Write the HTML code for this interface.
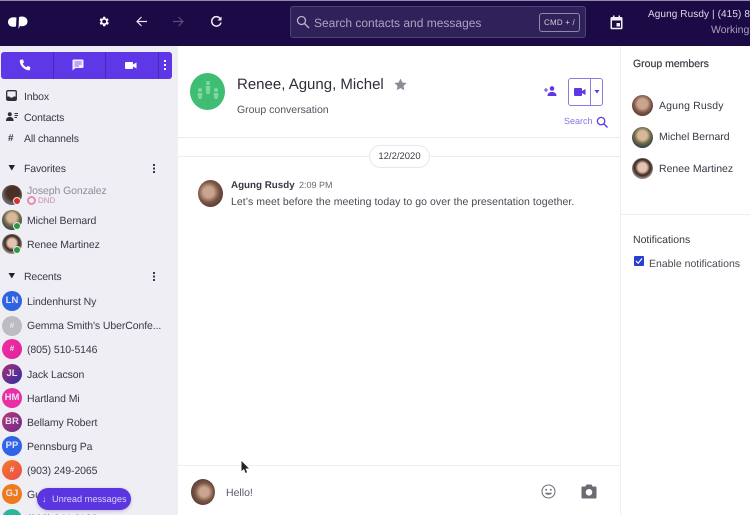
<!DOCTYPE html>
<html><head><meta charset="utf-8">
<style>
*{box-sizing:border-box}
html,body{margin:0;padding:0;width:750px;height:515px;overflow:hidden}
#w{position:relative;width:750px;height:515px;overflow:hidden;background:#fff;font-family:"Liberation Sans",sans-serif;color:#3a3844;font-size:11px;letter-spacing:0;text-rendering:geometricPrecision;filter:blur(.3px)}
.a{position:absolute;white-space:nowrap}
.s{letter-spacing:-.15px}
.av{position:absolute;border-radius:50%;width:20px;height:20px;left:2px;color:#e9e4f4;font-weight:bold;font-size:9.500px;text-align:center;line-height:20px;letter-spacing:0}
.n{position:absolute;left:27px;white-space:nowrap;font-size:10.500px;line-height:14px;letter-spacing:-.1px;margin-top:1px}
.dot{position:absolute;width:8px;height:8px;border-radius:50%;left:13px;border:1px solid #efeef4}
svg{position:absolute;overflow:visible}
</style></head><body><div id="w">
<!-- top bar -->
<div class="a" style="left:0;top:0;width:750px;height:46px;background:#1b0a45"></div>
<div class="a" style="left:0;top:0;width:750px;height:1px;background:#8f8aa5"></div>
<svg style="left:7px;top:14px" width="22" height="16" viewBox="0 0 22 16"><path d="M9.500 3.500C5 2.500 1 4 1 8s4 5.500 8 4.500zM12 3C17 1.500 20.500 4 20.500 7.500S17 13 13 12L11.500 15z" fill="#fff"/></svg>
<svg style="left:97px;top:15px" width="13" height="13" viewBox="0 0 24 24"><path fill="#fff" d="M19.400 13a7.500 7.500 0 0 0 0-2l2.100-1.600-2-3.500-2.500 1a7.500 7.500 0 0 0-1.700-1L15.400 3.200h-4l-.4 2.700a7.500 7.500 0 0 0-1.700 1l-2.500-1-2 3.500L6.900 11a7.500 7.500 0 0 0 0 2l-2.100 1.600 2 3.500 2.500-1a7.500 7.500 0 0 0 1.700 1l.4 2.700h4l.4-2.700a7.500 7.500 0 0 0 1.700-1l2.500 1 2-3.500zM13.200 15.500a3.500 3.500 0 1 1 0-7 3.500 3.500 0 0 1 0 7z"/></svg>
<svg style="left:135px;top:15px" width="13" height="13" viewBox="0 0 13 13"><path d="M12 6.500H2M6.500 2L2 6.500 6.500 11" fill="none" stroke="#e8e5f0" stroke-width="1.200"/></svg>
<svg style="left:172px;top:15px" width="13" height="13" viewBox="0 0 13 13"><path d="M1 6.500H11M6.500 2L11 6.500 6.500 11" fill="none" stroke="#5b4d7c" stroke-width="1.200"/></svg>
<svg style="left:210px;top:15px" width="13" height="13" viewBox="0 0 13 13"><path d="M10.500 4A4.700 4.700 0 1 0 11 7.500" fill="none" stroke="#f0eef5" stroke-width="1.500"/><path d="M11.500 1.500V5.500H7.500z" fill="#f0eef5"/></svg>
<div class="a" style="left:290px;top:6px;width:296px;height:32px;background:#2f2159;border:1px solid #4f4375;border-radius:3px"></div>
<svg style="left:296px;top:15px" width="14" height="14" viewBox="0 0 14 14"><circle cx="5.500" cy="5.500" r="4" fill="none" stroke="#b9b3cb" stroke-width="1.300"/><path d="M8.500 8.500L13 13" stroke="#b9b3cb" stroke-width="1.400"/></svg>
<div class="a" style="left:314px;top:15px;font-size:12px;line-height:16px;color:#aaa4bd">Search contacts and messages</div>
<div class="a" style="left:539px;top:13px;width:41px;height:19px;border:1px solid #8f88a8;border-radius:3px;color:#d5d1e0;font-size:8px;line-height:17px;text-align:center;letter-spacing:.2px">CMD + /</div>
<svg style="left:610px;top:15px" width="13" height="15" viewBox="0 0 13 15"><path fill="#f2f0f7" d="M1.500 2H3V.5h1.500V2h4V.5H10V2h1.500A1.300 1.300 0 0 1 12.500 3.300V13a1.300 1.300 0 0 1-1 1.300h-10A1.300 1.300 0 0 1 .5 13V3.300A1.300 1.300 0 0 1 1.500 2zM2 5.500V12.800H11V5.500z"/><rect x="6.500" y="8" width="3.500" height="3.500" fill="#f2f0f7"/></svg>
<div class="a" style="left:648px;top:8px;font-size:10px;line-height:14px;color:#dedbe8;letter-spacing:.1px">Agung Rusdy | (415) 8</div>
<div class="a" style="left:711px;top:23px;font-size:10.500px;line-height:14px;color:#a6a0b8">Working</div>

<!-- sidebar -->
<div class="a" style="left:0;top:46px;width:178px;height:469px;background:#efeef4"></div>
<div class="a" style="left:1px;top:52px;width:171px;height:27px;background:#5e37e6;border-radius:3px"></div>
<div class="a" style="left:53px;top:52px;width:1px;height:27px;background:#4a27bd"></div>
<div class="a" style="left:105px;top:52px;width:1px;height:27px;background:#4a27bd"></div>
<div class="a" style="left:158px;top:52px;width:1px;height:27px;background:#4a27bd"></div>
<svg style="left:19px;top:59px" width="12" height="12" viewBox="0 0 12 12"><path d="M1.500.8L4 .5 5 3.200 3.700 4.500C4.300 6 5.800 7.600 7.500 8.200L8.800 7 11.300 8 11 10.600C10.800 11.200 10 11.500 9.300 11.300 5 10.500 1.500 7 .8 2.600.7 1.700 1 1 1.500.8z" fill="#fff"/></svg>
<svg style="left:72px;top:59px" width="12" height="12" viewBox="0 0 12 12"><path d="M1.500.5h9A1 1 0 0 1 11.500 1.500V8a1 1 0 0 1-1 1H3.500L.5 11.500V1.500A1 1 0 0 1 1.500.5z" fill="#f1edff"/><path d="M2.500 3H9.500M2.500 5H9.500M2.500 7H7" stroke="#5e37e6" stroke-width=".8"/></svg>
<svg style="left:125px;top:61px" width="12" height="9" viewBox="0 0 12 9"><rect x="0" y="1" width="8" height="7" rx="1" fill="#fff"/><path d="M8 3.500L11.500 1.500V7.500L8 5.500z" fill="#fff"/></svg>
<div class="a" style="left:163.500px;top:60px;width:2px;height:2px;background:#fff;box-shadow:0 4px #fff,0 8px #fff"></div>

<svg style="left:6px;top:90px" width="11" height="11" viewBox="0 0 11 11"><rect x=".7" y=".7" width="9.600" height="9.600" rx="1.200" fill="none" stroke="#302e38" stroke-width="1.300"/><path d="M1 6.500H3.500C3.800 8 7.200 8 7.500 6.500H10V10H1z" fill="#302e38"/></svg>
<div class="a s" style="left:24px;top:90px;line-height:14px;font-size:10.500px">Inbox</div>
<svg style="left:6px;top:112px" width="12" height="9" viewBox="0 0 12 9"><circle cx="3.800" cy="2.300" r="2" fill="#302e38"/><path d="M0 9C0 6 1.500 5 3.800 5S7.600 6 7.600 9z" fill="#302e38"/><path d="M8.500 1.500H12M8.500 3.500H12M8.500 5.500H11" stroke="#302e38" stroke-width=".9"/></svg>
<div class="a s" style="left:24px;top:111px;line-height:14px;font-size:10.500px">Contacts</div>
<div class="a" style="left:8px;top:132px;line-height:14px;font-size:10px;font-weight:bold">#</div>
<div class="a s" style="left:24px;top:132px;line-height:14px;font-size:10.500px">All channels</div>

<svg style="left:8px;top:165px" width="8" height="6" viewBox="0 0 8 6"><path d="M.5 0H7L3.800 5.500z" fill="#22202a"/></svg>
<div class="a s" style="left:24px;top:162px;line-height:14px;font-size:10.500px">Favorites</div>
<div class="a" style="left:153px;top:164px;width:2px;height:2px;background:#3a3844;box-shadow:0 3.500px #3a3844,0 7px #3a3844"></div>

<div class="av" style="top:185px;background:radial-gradient(circle at 55% 40%,#4a2f25 0 38%,#68666a 65%)"></div>
<div class="dot" style="top:197px;background:#d8322a"></div>
<div class="n" style="top:183px;color:#8f8b99">Joseph Gonzalez</div>
<div class="a" style="left:27px;top:196px;width:9px;height:9px;border-radius:50%;border:2px solid #e68cb5"></div>
<div class="a" style="left:38px;top:195px;font-size:8px;line-height:11px;color:#c792ab">DND</div>

<div class="av" style="top:210px;background:radial-gradient(circle at 50% 38%,#d8b89a 0 28%,#6d6a45 50%,#2d3550 85%)"></div>
<div class="dot" style="top:222px;background:#2b9a3e"></div>
<div class="n" style="top:213px">Michel Bernard</div>

<div class="av" style="top:234px;background:radial-gradient(circle at 50% 45%,#e3c4b2 0 28%,#3a2620 48%,#d9d4cd 85%)"></div>
<div class="dot" style="top:246px;background:#2b9a3e"></div>
<div class="n" style="top:237px">Renee Martinez</div>

<svg style="left:8px;top:273px" width="8" height="6" viewBox="0 0 8 6"><path d="M.5 0H7L3.800 5.500z" fill="#22202a"/></svg>
<div class="a s" style="left:24px;top:270px;line-height:14px;font-size:10.500px">Recents</div>
<div class="a" style="left:153px;top:272px;width:2px;height:2px;background:#3a3844;box-shadow:0 3.500px #3a3844,0 7px #3a3844"></div>

<div class="av" style="top:291px;background:#2d64e0">LN</div><div class="n" style="top:294px">Lindenhurst Ny</div>
<div class="av" style="top:316px;background:#bdbcc0;font-size:8px">#</div><div class="n" style="top:318px">Gemma Smith's UberConfe...</div>
<div class="av" style="top:339px;background:linear-gradient(135deg,#f02fa0,#e0209a);font-size:8px">#</div><div class="n" style="top:342px">(805) 510-5146</div>
<div class="av" style="top:364px;background:linear-gradient(135deg,#a82f6e,#2b2fa8)">JL</div><div class="n" style="top:367px">Jack Lacson</div>
<div class="av" style="top:388px;background:#ea2fa5">HM</div><div class="n" style="top:391px">Hartland Mi</div>
<div class="av" style="top:412px;background:linear-gradient(135deg,#b53a7a,#6c2a8c)">BR</div><div class="n" style="top:415px">Bellamy Robert</div>
<div class="av" style="top:436px;background:#2d64e8">PP</div><div class="n" style="top:439px">Pennsburg Pa</div>
<div class="av" style="top:460px;background:linear-gradient(135deg,#f27a2a,#ee4a4a);font-size:8px">#</div><div class="n" style="top:463px">(903) 249-2065</div>
<div class="av" style="top:484px;background:#ef7a1c">GJ</div><div class="n" style="top:487px">Gu</div>
<div class="av" style="top:509px;background:#2fb59a"></div><div class="n" style="top:511px;color:#55535e">(888) 844-3133</div>
<div class="a" style="left:37px;top:488px;width:94px;height:22px;border-radius:11px;background:#5a35e0;box-shadow:0 1px 3px rgba(60,40,130,.3)"></div>
<div class="a" style="left:42px;top:493px;color:#d9d0fb;font-size:9px;line-height:13px">↓</div>
<div class="a" style="left:52px;top:493px;color:#d9d0fb;font-size:9.200px;line-height:13px">Unread messages</div>

<!-- header -->
<div class="a" style="left:190px;top:73px;width:35px;height:37px;border-radius:50%;background:#3fbd73"></div>
<svg style="left:196px;top:78px" width="24" height="26" viewBox="0 0 24 26"><g fill="#7fd7a4"><circle cx="12" cy="5" r="2"/><path d="M9.500 8h5l-1 8h-3z"/><circle cx="4" cy="12" r="2"/><path d="M1.500 15h5l-1 6h-3z"/><circle cx="20" cy="12" r="2"/><path d="M17.500 15h5l-1 6h-3z"/></g></svg>
<div class="a" style="left:237px;top:75px;font-size:15px;line-height:20px;color:#2f2d38">Renee, Agung, Michel</div>
<svg style="left:394px;top:78px" width="13" height="13" viewBox="0 0 24 24"><path d="M12 1l3.400 7.300 7.900 1-5.800 5.400 1.500 7.900L12 18.700l-7 3.900 1.500-7.900L.7 9.300l7.900-1z" fill="#8e8b99"/></svg>
<div class="a" style="left:237px;top:103px;font-size:10.500px;line-height:14px;color:#55535e">Group conversation</div>

<svg style="left:544px;top:86px" width="13" height="10" viewBox="0 0 13 10"><circle cx="8" cy="2.500" r="2.300" fill="#5e37e6"/><path d="M3.500 10C3.500 7 5.500 6 8 6S12.500 7 12.500 10z" fill="#5e37e6"/><path d="M0 4H4M2 2V6" stroke="#5e37e6" stroke-width="1"/></svg>
<div class="a" style="left:568px;top:78px;width:35px;height:28px;border:1px solid #8e78e2;border-radius:3px"></div>
<div class="a" style="left:590px;top:78px;width:1px;height:28px;background:#8e78e2"></div>
<svg style="left:574px;top:88px" width="12" height="9" viewBox="0 0 12 9"><rect x="0" y="0" width="8" height="8" rx="1" fill="#5e37e6"/><path d="M8 3L11.500 1V7L8 5z" fill="#5e37e6"/></svg>
<svg style="left:594px;top:90px" width="6" height="4" viewBox="0 0 6 4"><path d="M.5 0H5.500L3 3.500z" fill="#5e37e6"/></svg>
<div class="a" style="left:564px;top:115px;font-size:9px;line-height:13px;color:#8a74dc">Search</div>
<svg style="left:596px;top:116px" width="12" height="12" viewBox="0 0 13 13"><circle cx="5.500" cy="5.500" r="4" fill="none" stroke="#5e37e6" stroke-width="1.400"/><path d="M8.500 8.500L12.500 12.500" stroke="#5e37e6" stroke-width="1.500"/></svg>
<div class="a" style="left:178px;top:137px;width:442px;height:1px;background:#eceaf0"></div>

<!-- date -->
<div class="a" style="left:178px;top:156px;width:442px;height:1px;background:#ececf0"></div>
<div class="a" style="left:369px;top:145px;width:61px;height:23px;background:#fff;border:1px solid #e8e7ec;border-radius:12px;text-align:center;font-size:9.500px;line-height:21px;color:#3e3c47">12/2/2020</div>

<!-- message -->
<div class="a" style="left:198px;top:180px;width:25px;height:27px;border-radius:50%;background:radial-gradient(circle at 42% 45%,#c9a48e 0 25%,#7a5545 50%,#4a3128 85%)"></div>
<div class="a" style="left:231px;top:179px;font-size:9.800px;line-height:14px;font-weight:bold;color:#3a3844">Agung Rusdy</div>
<div class="a" style="left:299px;top:179px;font-size:9px;line-height:13px;color:#6c6a75">2:09 PM</div>
<div class="a" style="left:231px;top:195px;font-size:10.500px;line-height:14px;color:#4a4853;letter-spacing:.06px">Let’s meet before the meeting today to go over the presentation together.</div>

<!-- composer -->
<div class="a" style="left:178px;top:465px;width:442px;height:1px;background:#eeedf1"></div>
<div class="a" style="left:191px;top:479px;width:24px;height:26px;border-radius:50%;background:radial-gradient(circle at 55% 50%,#c9a48e 0 25%,#7a5545 50%,#4a3128 85%)"></div>
<div class="a" style="left:226px;top:486px;font-size:10.500px;line-height:14px;color:#5a5863">Hello!</div>
<svg style="left:541px;top:484px" width="15" height="15" viewBox="0 0 15 15"><circle cx="7.500" cy="7.500" r="6.500" fill="none" stroke="#74727c" stroke-width="1.100"/><circle cx="5.200" cy="5.800" r="1" fill="#74727c"/><circle cx="9.800" cy="5.800" r="1" fill="#74727c"/><path d="M4 8.800H11C10.500 11.500 4.500 11.500 4 8.800z" fill="#74727c"/></svg>
<svg style="left:581px;top:484px" width="16" height="15" viewBox="0 0 16 15"><path fill-rule="evenodd" d="M1.500 2.500H4.500L5.500 .5H10.500L11.500 2.500H14.500A1 1 0 0 1 15.500 3.500V13.500A1 1 0 0 1 14.500 14.500H1.500A1 1 0 0 1 .5 13.500V3.500A1 1 0 0 1 1.500 2.500zM8 5A3.300 3.300 0 1 0 8 11.600 3.300 3.300 0 0 0 8 5z" fill="#6c6a74"/></svg>
<svg style="left:241px;top:461px" width="9" height="13" viewBox="0 0 9 13"><path d="M.5 0V10L3 8 4.500 12 6 11.300 4.600 7.500H8z" fill="#22222a"/></svg>

<!-- right panel -->
<div class="a" style="left:620px;top:46px;width:1px;height:469px;background:#eeedf1"></div>
<div class="a" style="left:633px;top:57px;font-size:10.500px;line-height:14px;color:#3a3844;-webkit-text-stroke:.2px #3a3844">Group members</div>
<div class="a" style="left:632px;top:95px;width:21px;height:21px;border-radius:50%;background:radial-gradient(circle at 50% 42%,#c9a48e 0 30%,#7a5545 55%,#4a3128 90%)"></div>
<div class="a" style="left:659px;top:99px;font-size:10.500px;line-height:14px;letter-spacing:.15px">Agung Rusdy</div>
<div class="a" style="left:632px;top:127px;width:21px;height:21px;border-radius:50%;background:radial-gradient(circle at 50% 40%,#d8b89a 0 28%,#6d6a45 50%,#1f2f50 85%)"></div>
<div class="a" style="left:659px;top:130px;font-size:10.500px;line-height:14px">Michel Bernard</div>
<div class="a" style="left:632px;top:158px;width:21px;height:21px;border-radius:50%;background:radial-gradient(circle at 50% 45%,#e3c4b2 0 28%,#3a2620 50%,#d9d4cd 85%)"></div>
<div class="a" style="left:659px;top:162px;font-size:10.500px;line-height:14px">Renee Martinez</div>
<div class="a" style="left:621px;top:214px;width:129px;height:1px;background:#eeedf1"></div>
<div class="a" style="left:633px;top:233px;font-size:10.500px;line-height:14px;color:#3a3844">Notifications</div>
<div class="a" style="left:634px;top:256px;width:10px;height:10px;background:#2a3fd0;border-radius:1px"></div>
<svg style="left:635px;top:257px" width="8" height="8" viewBox="0 0 8 8"><path d="M1 4L3.200 6.200 7 1.500" fill="none" stroke="#fff" stroke-width="1.200"/></svg>
<div class="a" style="left:649px;top:257px;font-size:10.500px;line-height:14px;color:#4a4853">Enable notifications</div>
</div></body></html>
